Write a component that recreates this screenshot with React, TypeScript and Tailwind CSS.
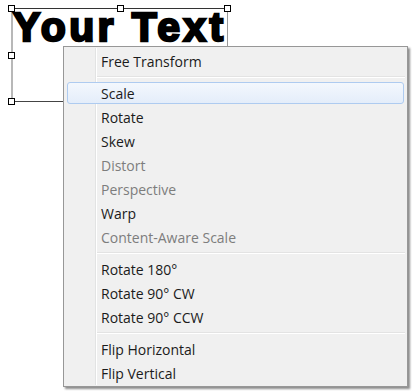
import React from 'react';

type Item =
  | { kind: 'item'; label: string; disabled?: boolean; active?: boolean }
  | { kind: 'sep' };

const items: Item[] = [
  { kind: 'item', label: 'Free Transform' },
  { kind: 'sep' },
  { kind: 'item', label: 'Scale', active: true },
  { kind: 'item', label: 'Rotate' },
  { kind: 'item', label: 'Skew' },
  { kind: 'item', label: 'Distort', disabled: true },
  { kind: 'item', label: 'Perspective', disabled: true },
  { kind: 'item', label: 'Warp' },
  { kind: 'item', label: 'Content-Aware Scale', disabled: true },
  { kind: 'sep' },
  { kind: 'item', label: 'Rotate 180°' },
  { kind: 'item', label: 'Rotate 90° CW' },
  { kind: 'item', label: 'Rotate 90° CCW' },
  { kind: 'sep' },
  { kind: 'item', label: 'Flip Horizontal' },
  { kind: 'item', label: 'Flip Vertical' },
];

function Handle({ className }: { className: string }) {
  return <div className={`absolute w-[7px] h-[7px] bg-white border border-black ${className}`} />;
}

export default function App() {
  return (
    <div className="relative w-[415px] h-[392px] bg-white overflow-hidden font-['Open_Sans',sans-serif]">
      {/* text layer with transform box */}
      <div className="absolute left-[11px] top-[8px] w-[217px] h-[94px] border-t border-b border-t-[#333] border-b-[#444] border-l-2 border-l-[#b8b8b8] border-r border-r-[#999]">
        <div className="pl-[0px] pt-[0px] -mt-[2px] font-['Liberation_Sans',Arial,sans-serif] font-bold text-[41px] leading-none tracking-[3.4px] text-black whitespace-nowrap [-webkit-text-stroke:2.4px_black]">
          Your Text
        </div>
        <Handle className="left-[-5px] top-[-4px]" />
        <Handle className="left-[104px] top-[-4px]" />
        <Handle className="right-[-4px] top-[-4px]" />
        <Handle className="left-[-5px] top-[43px]" />
        <Handle className="left-[-5px] bottom-[-4px]" />
      </div>

      {/* context menu */}
      <div className="absolute left-[63px] top-[46px] w-[345px] bg-[#f0f0f0] border border-[#979797] shadow-[2px_2px_2px_rgba(0,0,0,0.45)] pt-[2px] pb-[1px]">
        <div className="absolute left-[31px] top-[1px] bottom-[1px] w-[1px] bg-[#e2e3e3]" />
        <div className="absolute left-[32px] top-[1px] bottom-[1px] w-[1px] bg-white" />
        <div className="relative flex flex-col">
          {items.map((it, i) =>
            it.kind === 'sep' ? (
              <div key={i} className="h-[8px] flex flex-col justify-center pl-[33px] pr-[2px]">
                <div className="h-[1px] bg-[#e3e3e3]" />
                <div className="h-[1px] bg-white" />
              </div>
            ) : (
              <div key={i} className="h-[24px] px-[3px] py-[1px]">
                <div
                  className={`h-full flex items-center pl-[33px] pt-[1px] text-[14px] rounded-[3px] border ${
                    it.active
                      ? 'border-[#aecbf0] bg-gradient-to-b from-[#f3f7fd] to-[#e4edfa]'
                      : 'border-transparent'
                  } ${it.disabled ? 'text-[#7d7d7d]' : 'text-[#1b1b1b]'}`}
                >
                  {it.label}
                </div>
              </div>
            )
          )}
        </div>
      </div>
    </div>
  );
}
